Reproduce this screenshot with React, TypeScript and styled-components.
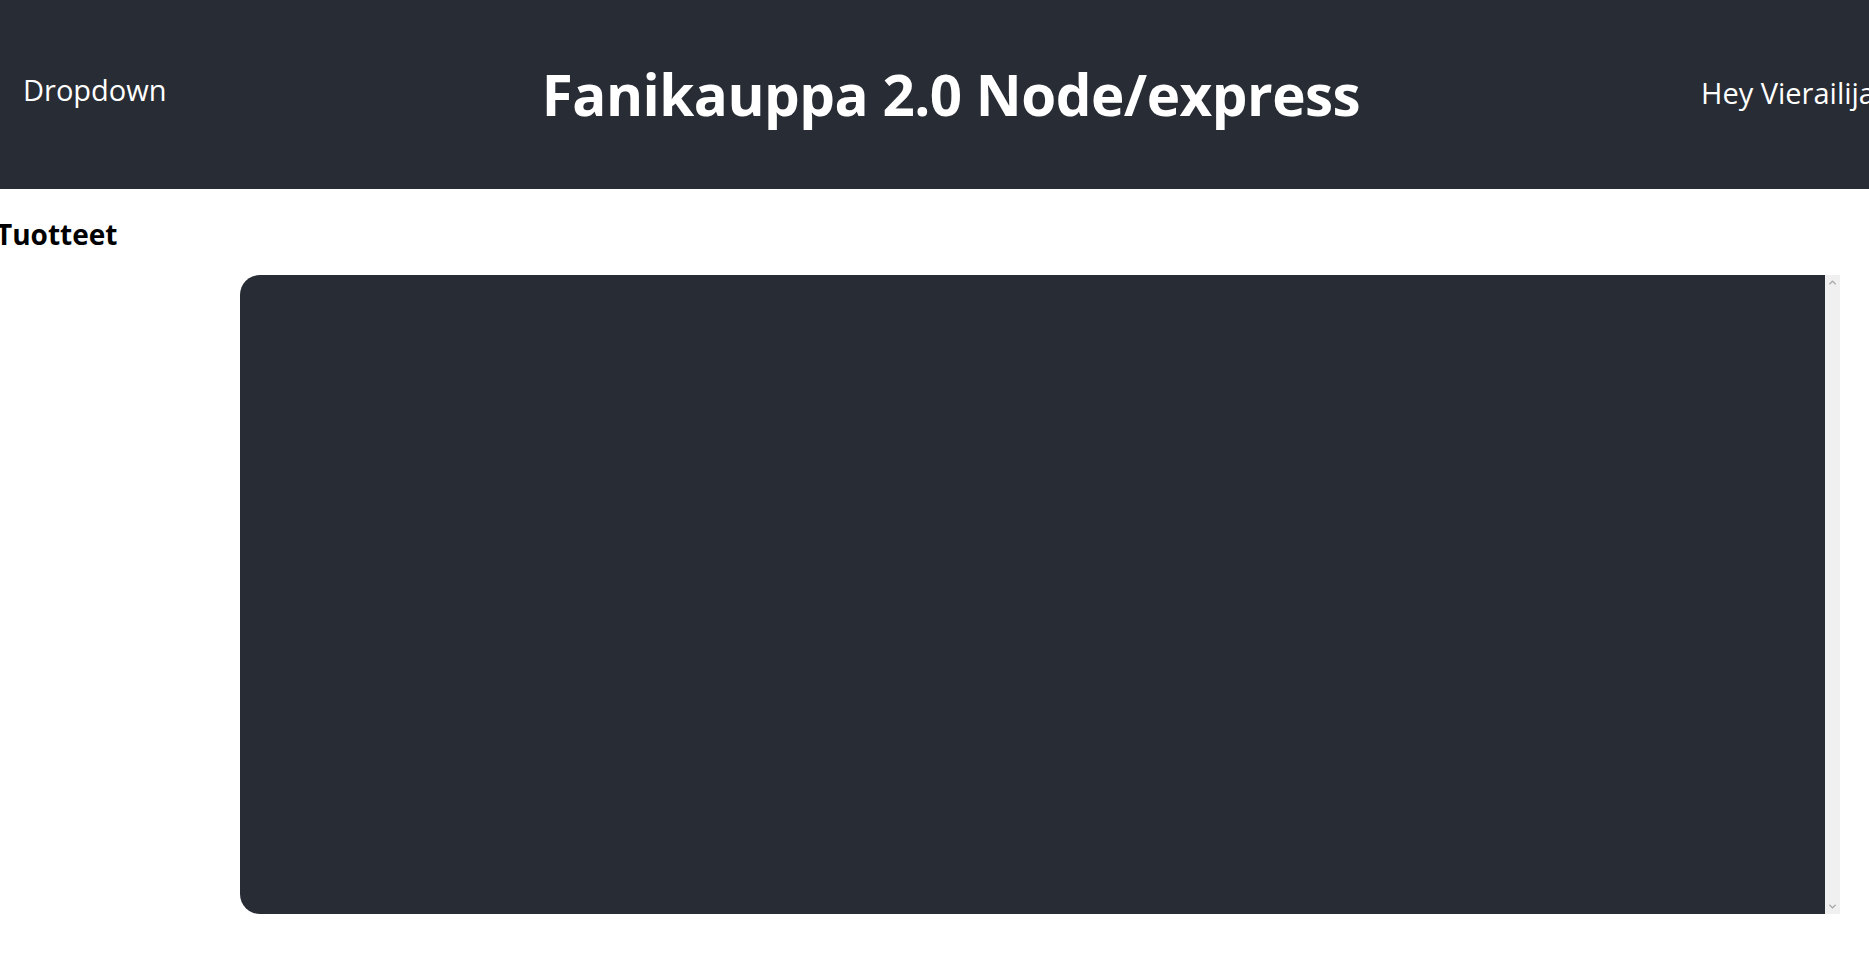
import React from 'react';
import styled, { createGlobalStyle } from 'styled-components';
import { ChevronUp, ChevronDown } from 'lucide-react';

const GlobalStyle = createGlobalStyle`
  html, body {
    margin: 0;
    padding: 0;
    background: #ffffff;
    overflow: hidden;
  }

  body {
    font-family: "Open Sans", "Noto Sans", sans-serif;
  }
`;

const Page = styled.div`
  width: 100%;
  min-height: 961px;
  overflow: hidden;
`;

const Header = styled.header`
  display: grid;
  grid-template-columns: 1fr auto 1fr;
  align-items: center;
  width: calc(100% + 33px); /* title sits a bit right of the middle */
  height: 189px;
  background-color: #282c34;
  color: #ffffff;
  box-sizing: border-box;
`;

const NavText = styled.span<{ $align: 'start' | 'end' }>`
  justify-self: ${(p) => p.$align};
  font-size: 29px;
  font-weight: 400;
  white-space: nowrap;
  padding: ${(p) => (p.$align === 'start' ? '0 0 10px 23px' : '0 27px 4px 0')};
`;

const Title = styled.h1`
  margin: 0;
  font-size: 56.5px;
  font-weight: 700;
  letter-spacing: -0.5px;
  white-space: nowrap;
`;

const Main = styled.main`
  padding-top: 20px;
`;

const SectionTitle = styled.h2`
  margin: 0 0 0 -4px;
  font-size: 28px;
  font-weight: 700;
  color: #000000;
  line-height: 50px;
`;

const ProductPanel = styled.div`
  display: flex;
  margin: 16px 0 0 240px;
  width: 1600px;
  height: 639px;
`;

const PanelBody = styled.div`
  flex: 1;
  background-color: #282c34;
  border-radius: 20px 0 0 20px;
`;

const ScrollRail = styled.div`
  display: flex;
  flex-direction: column;
  justify-content: space-between;
  align-items: center;
  width: 15px;
  padding: 2px 0;
  box-sizing: border-box;
  background-color: #f0f0f0;
  color: #a3a3a3;
`;

const App = () => (
  <Page>
    <GlobalStyle />
    <Header>
      <NavText $align="start">Dropdown</NavText>
      <Title>Fanikauppa 2.0 Node/express</Title>
      <NavText $align="end">Hey Vierailija</NavText>
    </Header>
    <Main>
      <SectionTitle>Tuotteet</SectionTitle>
      <ProductPanel>
        <PanelBody />
        <ScrollRail>
          <ChevronUp size={11} strokeWidth={3} />
          <ChevronDown size={11} strokeWidth={3} />
        </ScrollRail>
      </ProductPanel>
    </Main>
  </Page>
);

export default App;
